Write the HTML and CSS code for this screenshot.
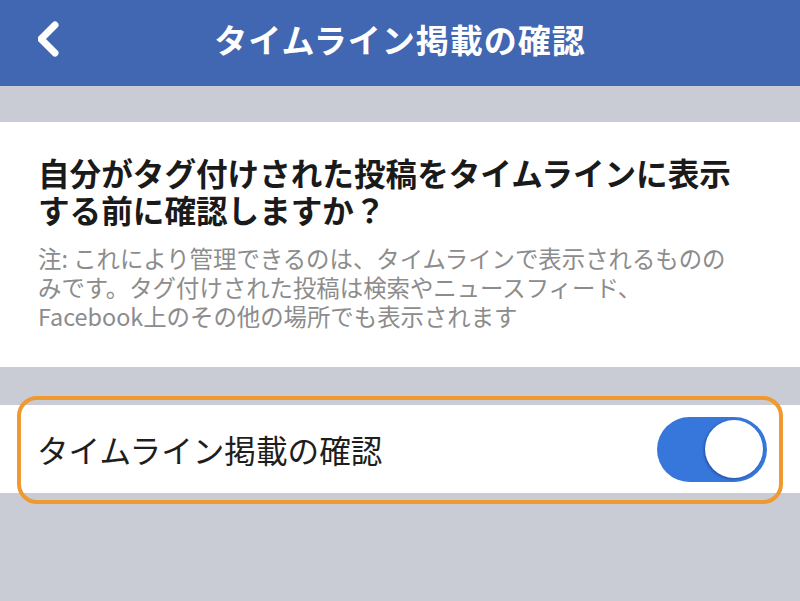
FILE: index.html
```html
<!DOCTYPE html>
<html lang="ja">
<head>
<meta charset="utf-8">
<link rel="stylesheet" href="styles.css">
</head>
<body>
<div class="page">
  <header class="nav">
    <svg class="back" width="40" height="40" viewBox="0 0 40 40">
      <path d="M17 4 L3 18 L17 32" fill="none" stroke="#fff" stroke-width="7" stroke-linecap="round" stroke-linejoin="round"/>
    </svg>
    <h1 class="title">タイムライン掲載の確認</h1>
  </header>
  <div class="band"></div>
  <section class="info">
    <h2 class="heading">自分がタグ付けされた投稿をタイムラインに表示<br>する前に確認しますか？</h2>
    <p class="note">注: これにより管理できるのは、タイムラインで表示されるものの<br>みです。タグ付けされた投稿は検索やニュースフィード、<br>Facebook上のその他の場所でも表示されます</p>
  </section>
  <div class="band band-2"></div>
  <div class="row">
    <span class="row-label">タイムライン掲載の確認</span>
    <div class="toggle"><div class="knob"></div></div>
    <div class="highlight"></div>
  </div>
</div>
</body>
</html>
```

FILE: styles.css
```css
html, body {
  margin: 0;
  padding: 0;
}
body {
  width: 800px;
  height: 601px;
  overflow: hidden;
  background: #c9ccd4;
  font-family: "Noto Sans CJK JP", "Noto Sans", sans-serif;
}
.page {
  display: flex;
  flex-direction: column;
}
.nav {
  position: relative;
  height: 86px;
  background: #4267b2;
  display: flex;
  align-items: center;
  justify-content: center;
}
.back {
  position: absolute;
  left: 38px;
  top: 21px;
}
.title {
  margin: 0;
  color: #fff;
  font-size: 33px;
  font-weight: 700;
  letter-spacing: 1px;
  line-height: 40px;
  margin-top: -8px;
}
.band {
  height: 36px;
  background: #c9ccd4;
}
.band-2 {
  height: 38px;
}
.info {
  background: #fff;
  padding: 32px 20px 36px 38px;
}
.heading {
  margin: 0;
  font-size: 31.6px;
  font-weight: 700;
  line-height: 37px;
  color: #1a1a1a;
}
.note {
  margin: 16px 0 0 0;
  font-size: 23.4px;
  line-height: 29px;
  color: #8c8c8c;
}
.row {
  position: relative;
  height: 88px;
  background: #fff;
  display: flex;
  align-items: center;
  justify-content: space-between;
  padding: 0 33px 0 37px;
}
.row-label {
  font-size: 31.6px;
  color: #1e1e1e;
  line-height: 40px;
}
.toggle {
  width: 110px;
  height: 65px;
  border-radius: 33px;
  background: #3777dc;
  display: flex;
  align-items: center;
  justify-content: flex-end;
  padding-right: 4px;
  box-sizing: border-box;
}
.knob {
  width: 58px;
  height: 58px;
  border-radius: 50%;
  background: #fff;
  box-shadow: -1px 1px 3px rgba(20, 50, 120, 0.6);
}
.highlight {
  position: absolute;
  left: 17px;
  right: 17px;
  top: -9px;
  bottom: -11px;
  border: 4px solid #ef9a30;
  border-radius: 20px;
  pointer-events: none;
}
```
